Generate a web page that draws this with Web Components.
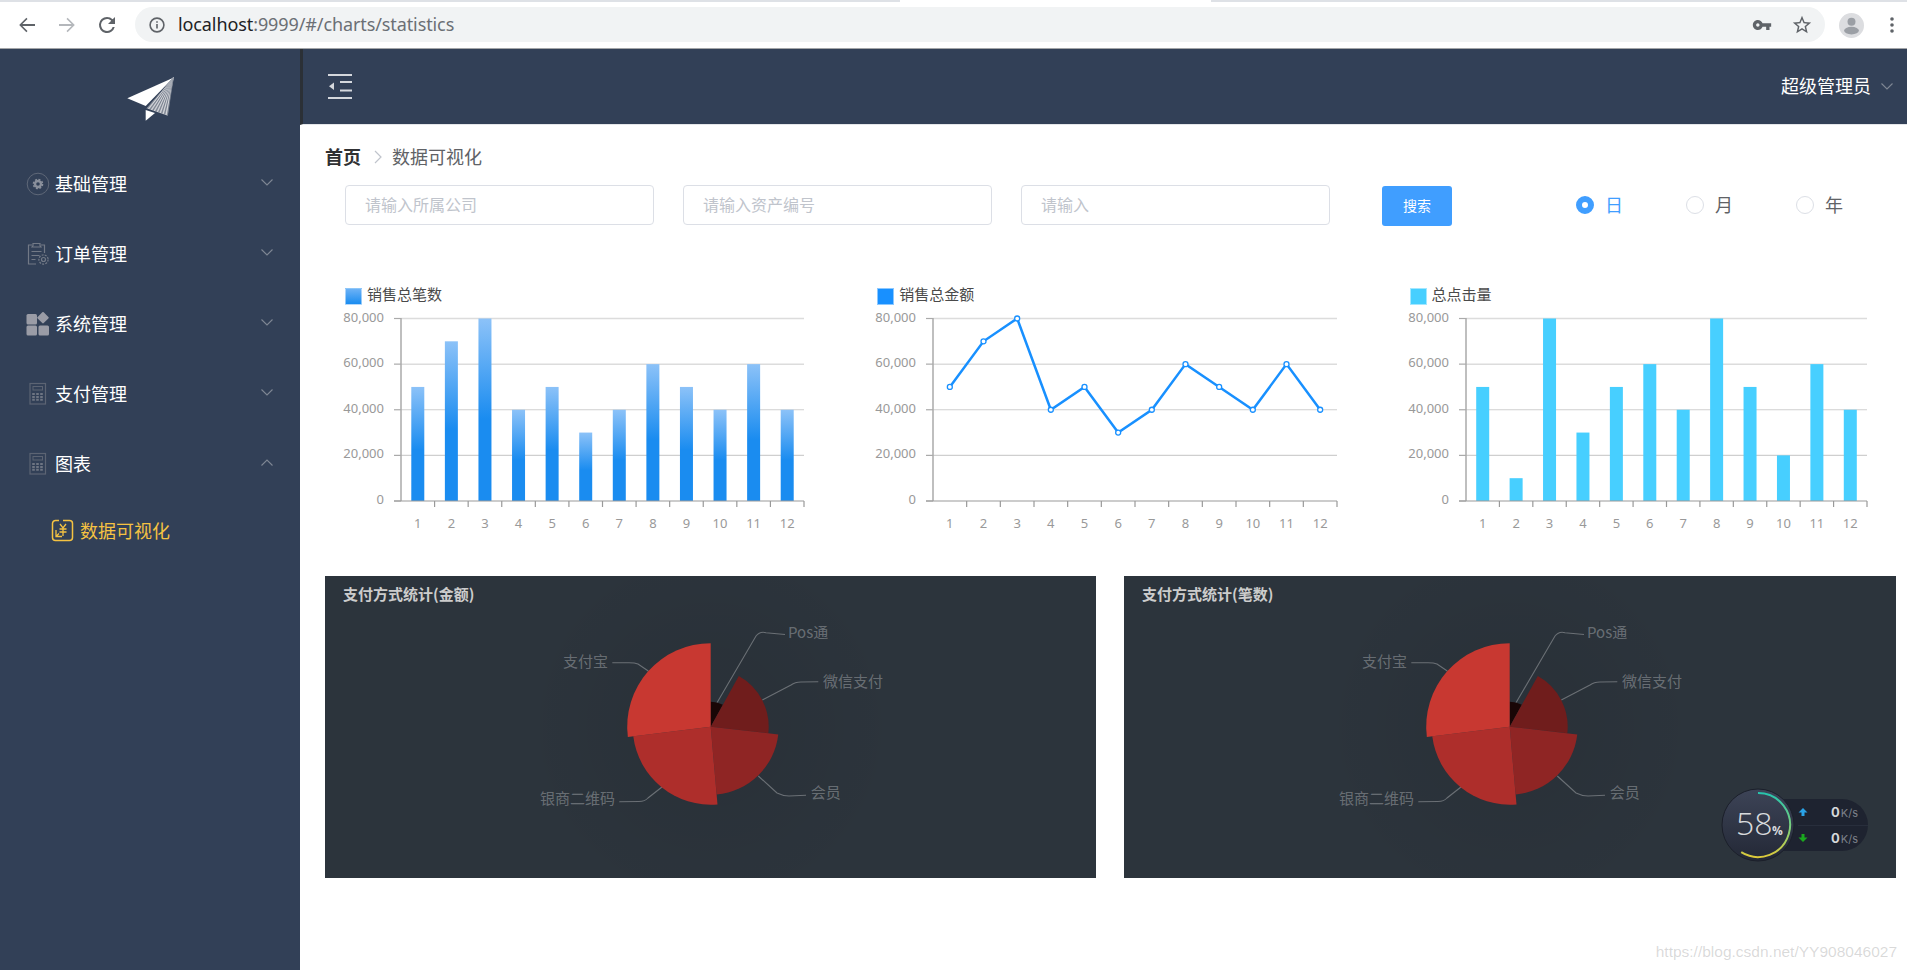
<!DOCTYPE html>
<html lang="zh">
<head>
<meta charset="utf-8">
<title>数据可视化</title>
<style>
    html, body { margin: 0; height: 100%; overflow: hidden; background: #fff; }
    body { font-family: "Noto Sans CJK SC", "Noto Sans", sans-serif; }
    .page { position: relative; width: 1907px; height: 970px; display: flex; flex-direction: column; overflow: hidden; }
    .app { flex: 1; display: flex; min-height: 0; }
    .main { flex: 1; display: flex; flex-direction: column; min-width: 0; }
</style>
</head>
<body>
<div class="page">
    <browser-bar url-host="localhost" url-rest=":9999/#/charts/statistics"></browser-bar>
    <div class="app">
        <side-bar>
            <side-item icon="gear" arrow="down">基础管理</side-item>
            <side-item icon="clip" arrow="down">订单管理</side-item>
            <side-item icon="grid" arrow="down">系统管理</side-item>
            <side-item icon="calc" arrow="down">支付管理</side-item>
            <side-item icon="calc" arrow="up">图表</side-item>
            <side-sub>数据可视化</side-sub>
        </side-bar>
        <div class="main">
            <top-header>超级管理员</top-header>
            <bread-crumb first="首页" second="数据可视化"></bread-crumb>
            <filter-bar>
                <text-field>请输入所属公司</text-field>
                <text-field>请输入资产编号</text-field>
                <text-field>请输入</text-field>
                <primary-button>搜索</primary-button>
                <radio-item checked>日</radio-item>
                <radio-item>月</radio-item>
                <radio-item>年</radio-item>
            </filter-bar>
            <chart-row>
                <stat-chart kind="bar" swatch="linear-gradient(#6cb2f6,#1a8cf0)" data="50,70,80,40,50,30,40,60,50,40,60,40" plot="403" gradient>销售总笔数</stat-chart>
                <stat-chart kind="line" swatch="#1890ff" data="50,70,80,40,50,30,40,60,50,40,60,40" plot="404">销售总金额</stat-chart>
                <stat-chart kind="bar" swatch="#47cfff" data="50,10,80,30,50,60,40,80,50,20,60,40" plot="401">总点击量</stat-chart>
            </chart-row>
            <pie-row>
                <pie-panel>支付方式统计(金额)</pie-panel>
                <pie-panel>支付方式统计(笔数)</pie-panel>
            </pie-row>
        </div>
    </div>
    <net-widget></net-widget>
    <water-mark>https://blog.csdn.net/YY908046027</water-mark>
</div>

<script>
const chevron = (dir, color) => `
    <svg width="12" height="7" viewBox="0 0 12 7" fill="none" stroke="${color}" stroke-width="1.1">
        <polyline points="${dir === 'up' ? '0.5,6.5 6,1 11.5,6.5' : '0.5,0.5 6,6 11.5,0.5'}"/>
    </svg>`;

class BrowserBar extends HTMLElement {
    constructor() {
        super();
        this.attachShadow({ mode: 'open' });
        this.shadowRoot.innerHTML = `
            <style>
                :host { display: block; flex: none; height: 49px; background: #fff; border-bottom: 1px solid #a3a5a8; box-sizing: border-box; }
                .strip { height: 2px; background: linear-gradient(90deg, #dee1e6 900px, #fff 900px, #fff 1211px, #dee1e6 1211px); }
                .tool { display: flex; align-items: center; height: 46px; padding-left: 15px; }
                .tool > svg { display: block; margin-right: 16px; }
                .pill { width: 1690px; height: 35px; box-sizing: border-box; margin-top: -1px; background: #f1f3f4; border-radius: 18px; display: flex; align-items: center; padding: 0 12px 0 14px; }
                .url { flex: 1; margin-left: 13px; font: 18px/35px "Noto Sans", sans-serif; color: #6b6f75; letter-spacing: -0.1px; }
                .url b { font-weight: normal; color: #202124; }
                .pill svg { display: block; }
                .star { margin-left: 19px; }
                .avatar { margin-left: 14px; }
                .dots { margin-left: 26px; }
            </style>
            <div class="strip"></div>
            <div class="tool">
                <svg width="24" height="24" viewBox="0 0 24 24" fill="#5f6368"><path d="M20 11.1H7.4l5.1-5.2-1.1-1.1L4.2 12l7.2 7.2 1.1-1.1-5.1-5.2H20z"/></svg>
                <svg width="24" height="24" viewBox="0 0 24 24" fill="#b4b7bb"><path d="M4 11.1h12.6l-5.1-5.2 1.1-1.1 7.2 7.2-7.2 7.2-1.1-1.1 5.1-5.2H4z"/></svg>
                <svg width="24" height="24" viewBox="0 0 24 24" fill="#5f6368"><path d="M17.65 6.35A7.95 7.95 0 0 0 12 4a8 8 0 1 0 7.73 10h-2.08A6 6 0 1 1 12 6c1.66 0 3.14.69 4.22 1.78L13 11h7V4l-2.35 2.35z"/></svg>
                <div class="pill">
                    <svg width="16" height="16" viewBox="0 0 16 16" fill="none" stroke="#5f6368" stroke-width="1.6"><circle cx="8" cy="8" r="6.9"/><path d="M8 7v4.6M8 4.2v1.6"/></svg>
                    <div class="url"><b>${this.getAttribute('url-host')}</b>${this.getAttribute('url-rest')}</div>
                    <svg width="20" height="20" viewBox="0 0 24 24" fill="#5f6368"><path d="M12.65 10C11.83 7.67 9.61 6 7 6c-3.31 0-6 2.69-6 6s2.69 6 6 6c2.61 0 4.83-1.67 5.65-4H17v4h4v-4h2v-4H12.65zM7 14c-1.1 0-2-.9-2-2s.9-2 2-2 2 .9 2 2-.9 2-2 2z"/></svg>
                    <svg class="star" width="22" height="22" viewBox="0 0 24 24" fill="#5f6368"><path d="M22 9.24l-7.19-.62L12 2 9.19 8.63 2 9.24l5.46 4.73L5.82 21 12 17.27 18.18 21l-1.63-7.03L22 9.24zM12 15.4l-3.76 2.27 1-4.28-3.32-2.88 4.38-.38L12 6.1l1.71 4.04 4.38.38-3.32 2.88 1 4.28L12 15.4z"/></svg>
                </div>
                <svg class="avatar" style="margin-right:0" width="25" height="25" viewBox="0 0 25 25"><circle cx="12.5" cy="12.5" r="12.5" fill="#dcdde0"/><circle cx="12.5" cy="8.8" r="4" fill="#9b9fa5"/><ellipse cx="12.5" cy="17.6" rx="7.4" ry="3.8" fill="#9b9fa5"/></svg>
                <svg class="dots" style="margin-right:0" width="4" height="16" viewBox="0 0 4 16" fill="#5f6368"><circle cx="2" cy="2" r="1.8"/><circle cx="2" cy="8" r="1.8"/><circle cx="2" cy="14" r="1.8"/></svg>
            </div>
        `;
    }
}
customElements.define('browser-bar', BrowserBar);

class SideBar extends HTMLElement {
    constructor() {
        super();
        this.attachShadow({ mode: 'open' });
        // abanico gris del avion de papel
        let fan = '';
        for (let i = 0; i <= 14; i++) {
            const x = 27 + i * 20.5 / 14;
            const y = 38.5 + i * 7 / 14;
            fan += `<line x1="53.3" y1="7.7" x2="${x}" y2="${y}" stroke="${i % 2 ? '#dfe1e5' : '#6e7786'}" stroke-width="0.8"/>`;
        }
        this.shadowRoot.innerHTML = `
            <style>
                :host { display: block; flex: none; width: 300px; background: #324057; color: #fff; }
                .logo { height: 100px; box-sizing: border-box; padding: 21px 0 0 120px; }
                svg { display: block; }
            </style>
            <div class="logo">
                <svg width="60" height="55" viewBox="0 0 60 55">
                    <polygon points="7.3,28.3 25.7,36 53.3,7.7" fill="#fff"/>
                    <polygon points="53.3,7.7 26.7,38.3 47.7,45.7" fill="#a9adb5"/>
                    ${fan}
                    <polygon points="25.7,40 25.7,50.7 35,43" fill="#fff"/>
                </svg>
            </div>
            <slot></slot>
        `;
    }
}
customElements.define('side-bar', SideBar);

const sideIcons = {
    gear: `<svg width="24" height="24" viewBox="0 0 24 24" fill="none"><circle cx="12" cy="12" r="10.8" stroke="#5f6878" stroke-width="1"/><circle cx="12" cy="12" r="3" stroke="#8a909c" stroke-width="2.4"/><circle cx="12" cy="12" r="4.6" stroke="#8a909c" stroke-width="1.4" stroke-dasharray="2 1.6"/></svg>`,
    clip: `<svg width="24" height="24" viewBox="0 0 24 24" fill="none" stroke="#727986" stroke-width="1.2"><path d="M6 3H2.5v19H10M15 3h3.5v8"/><path d="M7 3.5V1.5h7v2l1 1.5H6z"/><path d="M5.5 9.5h10M5.500 13.500h8M5.500 17.500h4"/><circle cx="17.5" cy="17.5" r="2"/><circle cx="17.5" cy="17.5" r="4.6" stroke-dasharray="2 1.2"/></svg>`,
    grid: `<svg width="24" height="24" viewBox="0 0 24 24" fill="#9a9ca6"><rect x="0.5" y="2" width="10.5" height="10.5" rx="1.5"/><rect x="12.5" y="1.5" width="8.6" height="8.6" rx="1" transform="rotate(45 17 6)"/><rect x="0.5" y="13.5" width="10.5" height="10" rx="1.5"/><rect x="12.5" y="13.5" width="10.5" height="10" rx="1.5"/></svg>`,
    calc: `<svg width="24" height="24" viewBox="0 0 24 24" fill="none" stroke="#5c6473"><rect x="4" y="1.5" width="15.5" height="20.5" stroke-width="1.2"/><rect x="7" y="4.5" width="9.5" height="3.5" stroke-width="1"/><path d="M7.5 11v8.5M11.5 11v8.5M15.5 11v8.5" stroke="#6e7583" stroke-width="2.6" stroke-dasharray="2 .9"/></svg>`
};

class SideItem extends HTMLElement {
    constructor() {
        super();
        this.attachShadow({ mode: 'open' });
        this.shadowRoot.innerHTML = `
            <style>
                :host { display: flex; align-items: center; height: 70px; padding-left: 26px; font-size: 18px; color: #fff; }
                .ic { width: 24px; height: 24px; margin-right: 5px; }
                .ar { margin-left: auto; margin-right: 27px; margin-top: -4px; }
                svg { display: block; }
                .tx { line-height: 24px; margin-top: -2px; }
            </style>
            <div class="ic">${sideIcons[this.getAttribute('icon')]}</div>
            <div class="tx"><slot></slot></div>
            <div class="ar">${chevron(this.getAttribute('arrow'), '#7f8794')}</div>
        `;
    }
}
customElements.define('side-item', SideItem);

class SideSub extends HTMLElement {
    constructor() {
        super();
        this.attachShadow({ mode: 'open' });
        this.shadowRoot.innerHTML = `
            <style>
                :host { display: flex; align-items: center; height: 62px; padding-left: 51px; font-size: 18px; color: #f5c242; }
                svg { display: block; margin-right: 6px; }
                span { margin-top: -1px; }
            </style>
            <svg width="23" height="23" viewBox="0 0 23 23" fill="none" stroke="#f5c242" stroke-width="1.5">
                <path d="M8 1.5H4.5a3 3 0 0 0-3 3v14a3 3 0 0 0 3 3h14a3 3 0 0 0 3-3V4.500a3 3 0 0 0-3-3H12"/>
                <path d="M9 5l3 4 3-4M8.500 10h7M8.500 13h7M12 9v8" stroke-width="1.300"/>
                <path d="M5 11v6.500h6M5 17.500l3-3" stroke-width="1.300"/>
            </svg>
            <span><slot></slot></span>
        `;
    }
}
customElements.define('side-sub', SideSub);

class TopHeader extends HTMLElement {
    constructor() {
        super();
        this.attachShadow({ mode: 'open' });
        this.shadowRoot.innerHTML = `
            <style>
                :host { display: flex; flex: none; align-items: center; height: 76px; box-sizing: border-box; background: #324057; border-left: 3px solid #2b3036; border-bottom: 1px solid #e4e6e9; padding: 0 14px 0 25px; color: #fff; font-size: 18px; }
                svg { display: block; }
                .user { margin-left: auto; margin-top: -3px; margin-right: -2px; }
                .ar { margin-left: 12px; }
            </style>
            <svg width="24" height="25" viewBox="0 0 24 25" fill="#d5d8dd">
                <rect x="0" y="0" width="24" height="2"/>
                <rect x="12" y="7" width="12" height="2"/>
                <rect x="12" y="15.500" width="12" height="2"/>
                <rect x="0" y="23" width="24" height="2"/>
                <polygon points="1,12.200 6,8.500 6,16"/>
            </svg>
            <div class="user"><slot></slot></div>
            <div class="ar">${chevron('down', '#7f8794')}</div>
        `;
    }
}
customElements.define('top-header', TopHeader);

class BreadCrumb extends HTMLElement {
    constructor() {
        super();
        this.attachShadow({ mode: 'open' });
        this.shadowRoot.innerHTML = `
            <style>
                :host { display: flex; flex: none; align-items: center; height: 26px; padding: 18px 0 16px 25px; font-size: 18px; line-height: 26px; color: #606266; }
                b { color: #303133; }
                svg { display: block; margin: 2px 10px 0 13px; }
            </style>
            <b>${this.getAttribute('first')}</b>
            <svg width="8" height="14" viewBox="0 0 8 14" fill="none" stroke="#c0c4cc" stroke-width="1.200"><polyline points="1,1 7,7 1,13"/></svg>
            <span>${this.getAttribute('second')}</span>
        `;
    }
}
customElements.define('bread-crumb', BreadCrumb);

class FilterBar extends HTMLElement {
    constructor() {
        super();
        this.attachShadow({ mode: 'open' });
        this.shadowRoot.innerHTML = `
            <style>
                :host { display: flex; flex: none; align-items: center; height: 40px; padding-left: 45px; }
            </style>
            <slot></slot>
        `;
    }
}
customElements.define('filter-bar', FilterBar);

class TextField extends HTMLElement {
    constructor() {
        super();
        this.attachShadow({ mode: 'open' });
        this.shadowRoot.innerHTML = `
            <style>
                :host { display: flex; align-items: center; width: 309px; height: 40px; box-sizing: border-box; margin-right: 29px; padding: 0 0 2px 19px; border: 1px solid #dcdfe6; border-radius: 4px; font-size: 16px; color: #c0c4cc; background: #fff; }
                :host(:nth-of-type(3)) { margin-right: 0; }
            </style>
            <slot></slot>
        `;
    }
}
customElements.define('text-field', TextField);

class PrimaryButton extends HTMLElement {
    constructor() {
        super();
        this.attachShadow({ mode: 'open' });
        this.shadowRoot.innerHTML = `
            <style>
                :host { display: flex; align-items: center; justify-content: center; width: 70px; height: 40px; box-sizing: border-box; padding-bottom: 2px; margin: 2px 124px 0 52px; background: #409eff; border-radius: 3px; color: #fff; font-size: 14px; }
            </style>
            <slot></slot>
        `;
    }
}
customElements.define('primary-button', PrimaryButton);

class RadioItem extends HTMLElement {
    constructor() {
        super();
        this.attachShadow({ mode: 'open' });
        const on = this.hasAttribute('checked');
        this.shadowRoot.innerHTML = `
            <style>
                :host { display: flex; align-items: center; width: 110px; font-size: 18px; color: ${on ? '#409eff' : '#606266'}; }
                .dot { width: 18px; height: 18px; box-sizing: border-box; border-radius: 50%; margin-right: 11px; border: ${on ? '6px solid #409eff' : '1px solid #dcdfe6'}; background: #fff; }
                span { margin-top: -3px; }
            </style>
            <div class="dot"></div>
            <span><slot></slot></span>
        `;
    }
}
customElements.define('radio-item', RadioItem);

class ChartRow extends HTMLElement {
    constructor() {
        super();
        this.attachShadow({ mode: 'open' });
        this.shadowRoot.innerHTML = `
            <style>
                :host { display: grid; flex: none; grid-template-columns: repeat(3, 532.300px); padding: 63px 0 0 45px; height: 351px; box-sizing: border-box; }
            </style>
            <slot></slot>
        `;
    }
}
customElements.define('chart-row', ChartRow);

class StatChart extends HTMLElement {
    constructor() {
        super();
        this.attachShadow({ mode: 'open' });
        const datos = this.getAttribute('data').split(',').map(Number);
        const plot = Number(this.getAttribute('plot'));
        const kind = this.getAttribute('kind');
        const x0 = 56, top = 14.500, bottom = 197, n = datos.length;
        const paso = plot / n;
        const y = v => bottom - (bottom - top) * v / 80;
        const cx = i => x0 + paso * (i + 0.5);

        // ejes y rejilla
        let g = '';
        [80, 60, 40, 20].forEach(v => {
            g += `<line x1="${x0}" x2="${x0 + plot}" y1="${y(v)}" y2="${y(v)}" stroke="${v > 50 ? '#dcdcdc' : '#cfcfcf'}" stroke-width="${v > 50 ? 1.500 : 1.200}"/>`;
        });
        [0, 20, 40, 60, 80].forEach(v => {
            g += `<line x1="${x0 - 7}" x2="${x0}" y1="${y(v)}" y2="${y(v)}" stroke="#aaa" stroke-width="1.200"/>`;
            g += `<text x="${x0 - 17}" y="${y(v) + 3}" text-anchor="end" class="lb">${v ? v + ',000' : '0'}</text>`;
        });

        let marks = '';
        if (kind === 'bar') {
            const fill = this.hasAttribute('gradient') ? 'url(#g)' : this.getAttribute('swatch');
            datos.forEach((v, i) => {
                marks += `<rect x="${cx(i) - 6.500}" y="${y(v)}" width="13" height="${bottom - y(v)}" fill="${fill}"/>`;
            });
        }
        g += marks;
        g += `<line x1="${x0}" x2="${x0}" y1="${top - 0.500}" y2="${bottom}" stroke="#aaa" stroke-width="1.500"/>`;
        g += `<line x1="${x0 - 7}" x2="${x0 + plot}" y1="${bottom}" y2="${bottom}" stroke="#999" stroke-width="1.200"/>`;
        for (let i = 1; i <= n; i++) {
            g += `<line x1="${x0 + paso * i}" x2="${x0 + paso * i}" y1="${bottom}" y2="${bottom + 6}" stroke="#999" stroke-width="1.200"/>`;
        }
        datos.forEach((v, i) => {
            g += `<text x="${cx(i)}" y="${bottom + 27}" text-anchor="middle" class="lb">${i + 1}</text>`;
        });
        if (kind === 'line') {
            g += `<polyline fill="none" stroke="#1890ff" stroke-width="2.500" points="${datos.map((v, i) => cx(i) + ',' + y(v)).join(' ')}"/>`;
            datos.forEach((v, i) => {
                g += `<circle cx="${cx(i)}" cy="${y(v)}" r="2.500" fill="#fff" stroke="#1890ff" stroke-width="1.300"/>`;
            });
        }

        this.shadowRoot.innerHTML = `
            <style>
                :host { display: block; }
                .legend { display: flex; align-items: center; height: 16px; font-size: 15px; color: #4a4a4a; }
                .legend span { margin-top: -5px; }
                .sw { width: 15px; height: 15px; margin-right: 5px; background: ${this.getAttribute('swatch')}; border: .5px solid rgba(255,255,255,.5); }
                svg { display: block; overflow: visible; }
                .lb { font: 13px "Noto Sans", sans-serif; fill: #999; }
            </style>
            <div class="legend"><div class="sw"></div><span><slot></slot></span></div>
            <svg width="500" height="232" viewBox="0 0 500 232">
                <defs><linearGradient id="g" x1="0" y1="0" x2="0" y2="1"><stop offset="0" stop-color="#8cc2f8"/><stop offset=".55" stop-color="#1a8cf0"/><stop offset="1" stop-color="#1a8cf0"/></linearGradient></defs>
                ${g}
            </svg>
        `;
    }
}
customElements.define('stat-chart', StatChart);

class PieRow extends HTMLElement {
    constructor() {
        super();
        this.attachShadow({ mode: 'open' });
        this.shadowRoot.innerHTML = `
            <style>
                :host { display: flex; flex: none; gap: 28px; padding: 0 11px 0 25px; }
            </style>
            <slot></slot>
        `;
    }
}
customElements.define('pie-row', PieRow);

class PiePanel extends HTMLElement {
    constructor() {
        super();
        this.attachShadow({ mode: 'open' });
        const cx = 385.700, cy = 150.700;
        // radio, angulo inicial y final, color
        const sectores = [
            { r: 25, a: 0, b: 29, c: '#190606' },
            { r: 58, a: 29, b: 96.500, c: '#701d1c' },
            { r: 68, a: 96.500, b: 175, c: '#8f2524' },
            { r: 78, a: 175, b: 263, c: '#ae2e2b' },
            { r: 83.500, a: 263, b: 360, c: '#c83831' }
        ];
        const pt = (r, d) => {
            const t = d * Math.PI / 180;
            return (cx + r * Math.sin(t)).toFixed(2) + ' ' + (cy - r * Math.cos(t)).toFixed(2);
        };
        const arcs = sectores.map(s => `<path fill="${s.c}" d="M${cx} ${cy}L${pt(s.r, s.a)}A${s.r} ${s.r} 0 ${s.b - s.a > 180 ? 1 : 0} 1 ${pt(s.r, s.b)}Z"/>`).join('');
        const guias = [
            'M391.700 127.300L431 60Q435 55 441 56.700L460 58.500',
            'M437.300 124L466 109Q470 106 476 106L493.300 105.700',
            'M433.300 200L452 217Q458 220 464 220L481 219.300',
            'M337.300 210.700L323 222Q320 225.500 314 225.500L294.300 225.700',
            'M323.300 95L313 88Q310 86.700 304 86.700L287.300 86.700'
        ].map(d => `<path d="${d}" fill="none" stroke="rgba(255,255,255,.3)" stroke-width="1.100"/>`).join('');
        const labels = [
            [463, 62, 'start', 'Pos通'],
            [498, 111, 'start', '微信支付'],
            [485.700, 222, 'start', '会员'],
            [290, 228, 'end', '银商二维码'],
            [283, 91, 'end', '支付宝']
        ].map(l => `<text x="${l[0]}" y="${l[1]}" text-anchor="${l[2]}">${l[3]}</text>`).join('');
        this.shadowRoot.innerHTML = `
            <style>
                :host { display: block; position: relative; flex: 0 0 771px; height: 302px; background: #2c343c; overflow: hidden; }
                :host(:last-child) { flex-basis: 772px; }
                svg { display: block; }
                text { font-size: 15px; fill: rgba(255,255,255,.3); }
                .titulo { position: absolute; left: 18px; top: 8px; font-size: 15px; line-height: 20px; font-weight: bold; color: #ccc; }
            </style>
            <svg width="772" height="302" viewBox="0 0 772 302">
                <defs><radialGradient id="s"><stop offset=".4" stop-color="#000" stop-opacity=".05"/><stop offset="1" stop-color="#000" stop-opacity="0"/></radialGradient></defs>
                <circle cx="${cx}" cy="${cy}" r="190" fill="url(#s)"/>
                ${guias}${arcs}${labels}
            </svg>
            <div class="titulo"><slot></slot></div>
        `;
    }
}
customElements.define('pie-panel', PiePanel);

class NetWidget extends HTMLElement {
    constructor() {
        super();
        this.attachShadow({ mode: 'open' });
        this.shadowRoot.innerHTML = `
            <style>
                :host { position: absolute; left: 1721px; top: 788px; width: 147px; height: 74px; font-family: "Inter", "Noto Sans", sans-serif; }
                .pill { position: absolute; left: 36px; right: 0; top: 11px; height: 52px; box-sizing: border-box; padding-left: 41px; background: #1e2330; border-radius: 0 26px 26px 0; display: flex; flex-direction: column; }
                .row { flex: 1; display: flex; align-items: center; padding-right: 10px; }
                .row + .row { border-top: 1px solid #282e3c; }
                .row svg { display: block; }
                .v { margin-left: auto; font-size: 13px; font-weight: 700; color: #d5d7da; }
                .u { font-size: 11px; font-weight: 400; color: #7d818a; margin-left: 1px; }
                .ball { position: absolute; left: 0; top: 0; display: block; }
                .num { font: 300 32px "Open Sans", sans-serif; fill: #d8dadd; }
                .pct { font: 700 12px "Open Sans", sans-serif; fill: #d8dadd; }
            </style>
            <div class="pill">
                <div class="row"><svg width="10" height="10" viewBox="0 0 10 10" fill="#2aa3e8"><path d="M5 1l4.500 4.500H6.500V9h-3V5.500H.500z"/></svg><span class="v">0<span class="u">K/s</span></span></div>
                <div class="row"><svg width="10" height="10" viewBox="0 0 10 10" fill="#1aa81f"><path d="M5 9L.500 4.500h3V1h3v3.500h3z"/></svg><span class="v">0<span class="u">K/s</span></span></div>
            </div>
            <svg class="ball" width="74" height="74" viewBox="0 0 74 74">
                <defs>
                    <linearGradient id="b" x1="0" y1="0" x2="0" y2="1"><stop offset="0" stop-color="#3d4457"/><stop offset="1" stop-color="#232836"/></linearGradient>
                    <linearGradient id="a" x1="0" y1="0" x2="0" y2="1"><stop offset="0" stop-color="#27c4ae"/><stop offset=".55" stop-color="#7ed07a"/><stop offset="1" stop-color="#dcc93a"/></linearGradient>
                </defs>
                <circle cx="37" cy="37" r="36" fill="url(#b)" stroke="#1b1f2a" stroke-width="1"/>
                <path d="M37 5A32 32 0 1 1 20.200 64.200" fill="none" stroke="url(#a)" stroke-width="2"/>
                <text x="15" y="47" class="num">58</text>
                <text x="51" y="47" class="pct">%</text>
            </svg>
        `;
    }
}
customElements.define('net-widget', NetWidget);

class WaterMark extends HTMLElement {
    constructor() {
        super();
        this.attachShadow({ mode: 'open' });
        this.shadowRoot.innerHTML = `
            <style>
                :host { position: absolute; right: 10px; top: 941px; font: 15.500px/22px "Liberation Sans", sans-serif; color: rgba(120,120,120,.28); }
            </style>
            <slot></slot>
        `;
    }
}
customElements.define('water-mark', WaterMark);
</script>
</body>
</html>
